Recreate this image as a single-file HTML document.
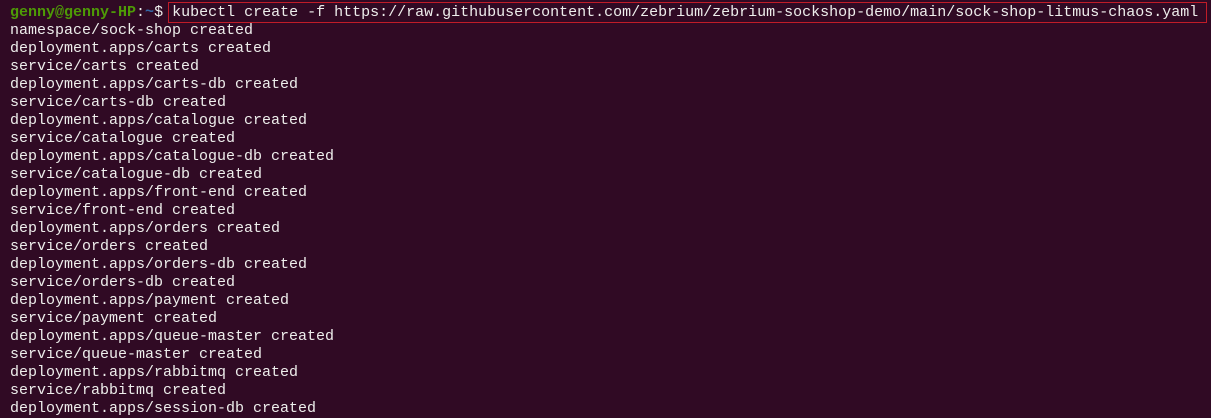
<!DOCTYPE html>
<html><head><style>
body{margin:0;background:#300a24;width:1211px;height:412px;overflow:hidden}
pre{margin:0;position:absolute;left:10px;top:4px;font-family:"Liberation Mono",monospace;font-size:15px;line-height:18px;color:#eeeeec;letter-spacing:0}
.g{color:#4e9a06;font-weight:bold}.b{color:#3465a4;font-weight:bold}
.box{position:absolute;left:168px;top:2px;width:1037px;height:19px;border:1px solid #c01c28}
</style></head><body>
<div class="box"></div>
<pre><span class="g">genny@genny-HP</span>:<span class="b">~</span>$ kubectl create -f https://raw.githubusercontent.com/zebrium/zebrium-sockshop-demo/main/sock-shop-litmus-chaos.yaml
namespace/sock-shop created
deployment.apps/carts created
service/carts created
deployment.apps/carts-db created
service/carts-db created
deployment.apps/catalogue created
service/catalogue created
deployment.apps/catalogue-db created
service/catalogue-db created
deployment.apps/front-end created
service/front-end created
deployment.apps/orders created
service/orders created
deployment.apps/orders-db created
service/orders-db created
deployment.apps/payment created
service/payment created
deployment.apps/queue-master created
service/queue-master created
deployment.apps/rabbitmq created
service/rabbitmq created
deployment.apps/session-db created</pre>
</body></html>
